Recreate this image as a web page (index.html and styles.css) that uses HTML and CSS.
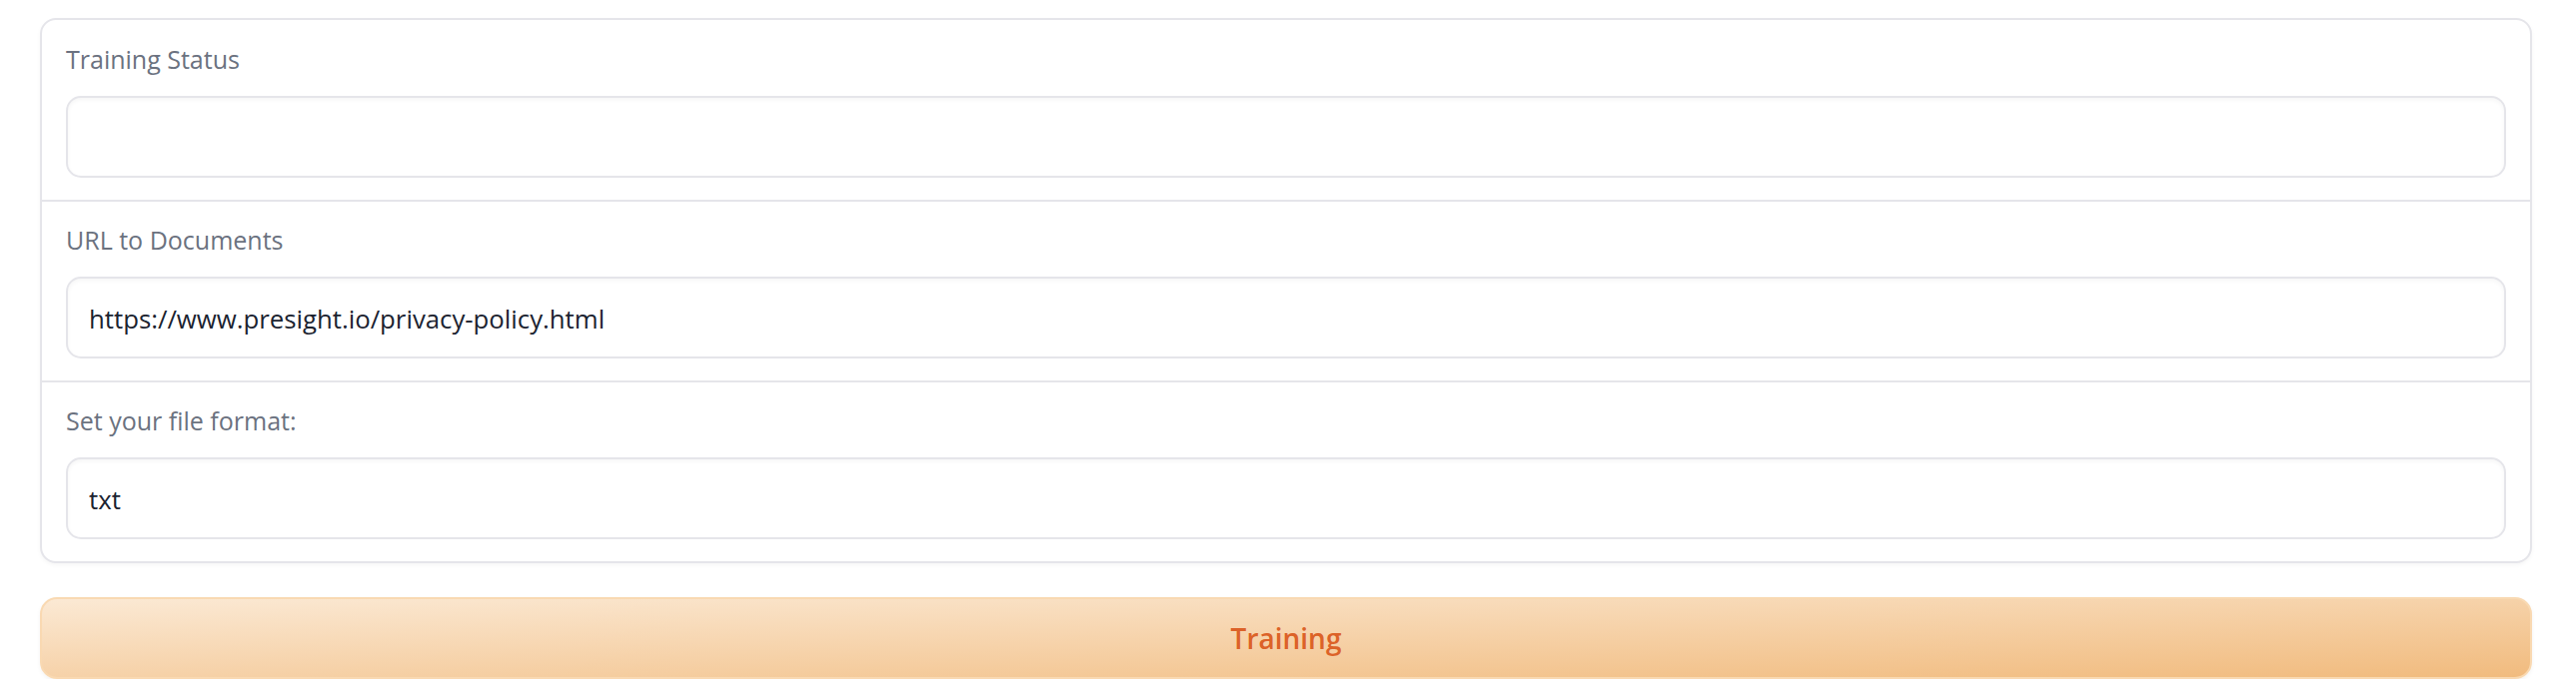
FILE: index.html
```html
<!DOCTYPE html>
<html lang="en">
<head>
<meta charset="utf-8">
<title>Training</title>
<link rel="stylesheet" href="styles.css">
</head>
<body>
<main class="app">
  <div class="form-box">
    <div class="field">
      <label class="field-label" for="status">Training Status</label>
      <input class="field-input" id="status" type="text" value="" readonly>
    </div>
    <div class="field">
      <label class="field-label" for="url">URL to Documents</label>
      <input class="field-input" id="url" type="text" value="https://www.presight.io/privacy-policy.html">
    </div>
    <div class="field">
      <label class="field-label" for="format">Set your file format:</label>
      <input class="field-input" id="format" type="text" value="txt">
    </div>
  </div>
  <button class="primary-btn" type="button">Training</button>
</main>
</body>
</html>
```

FILE: styles.css
```css
* {
  box-sizing: border-box;
}

html, body {
  margin: 0;
  background: #ffffff;
}

body {
  font-family: "Open Sans", "Noto Sans", sans-serif;
}

.app {
  padding: 18px 44px 0 40px;
  display: flex;
  flex-direction: column;
  gap: 34px;
}

.form-box {
  border: 2px solid #e5e5ea;
  border-radius: 16px;
  background: #ffffff;
  box-shadow: 0 2px 4px rgba(0, 0, 0, 0.04);
  overflow: hidden;
}

.field {
  display: flex;
  flex-direction: column;
  padding: 24px 24px 22px;
  gap: 22px;
}

.field + .field {
  padding-top: 23px;
  border-top: 2px solid #e5e5ea;
}

.field-label {
  font-size: 25px;
  line-height: 30px;
  color: #6b7280;
  height: 30px;
}

.field-input {
  display: block;
  width: 100%;
  height: 82px;
  margin: 0;
  padding: 2px 21px 0;
  border: 2px solid #e5e5ea;
  border-radius: 15px;
  background: #ffffff;
  box-shadow: inset 0 2px 4px rgba(0, 0, 0, 0.04);
  font-family: "Open Sans", "Noto Sans", sans-serif;
  font-size: 25.75px;
  color: #1b2330;
  outline: none;
}

.primary-btn {
  display: flex;
  align-items: center;
  justify-content: center;
  width: 100%;
  height: 82px;
  margin: 0;
  padding: 0;
  border: 2px solid #f9d9b2;
  border-radius: 17px;
  background: linear-gradient(to bottom right, #fbe9d4, #f1bb7e);
  box-shadow: 0 2px 4px rgba(0, 0, 0, 0.05);
  font-family: "Open Sans", "Noto Sans", sans-serif;
  font-size: 28px;
  font-weight: 600;
  color: #dc6228;
  cursor: pointer;
}
```
